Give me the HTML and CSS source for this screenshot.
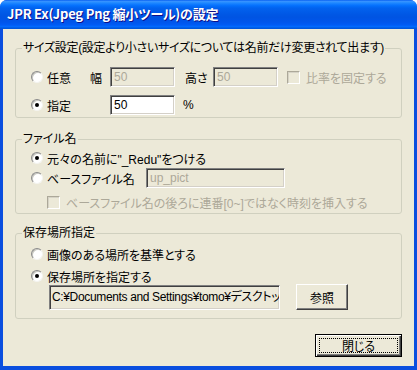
FILE: index.html
```html
<!DOCTYPE html>
<html lang="ja">
<head>
    <meta charset="UTF-8">
    <title>JPR Ex の設定</title>
    <link rel="stylesheet" href="styles.css">
</head>
<body>
<div class="window">
    <div class="titlebar">JPR Ex(Jpeg Png 縮小ツール)の設定</div>
    <div class="client">
        <fieldset class="group g-size">
            <legend>サイズ設定(設定より小さいサイズについては名前だけ変更されて出ます)</legend>
            <div class="body">
                <div class="row r-any">
                    <span class="opt w-any"><span class="radio"></span>任意</span>
                    <span class="lbl w-haba">幅</span>
                    <span class="edit off w-num">50</span>
                    <span class="lbl w-taka">高さ</span>
                    <span class="edit off w-num">50</span>
                    <span class="opt off chk-ratio"><span class="check"></span>比率を固定する</span>
                </div>
                <div class="row r-pct">
                    <span class="opt w-pct"><span class="radio on"></span>指定</span>
                    <span class="edit w-num">50</span>
                    <span class="lbl pct">%</span>
                </div>
            </div>
        </fieldset>

        <fieldset class="group g-name">
            <legend>ファイル名</legend>
            <div class="body">
                <div class="row r-20">
                    <span class="opt"><span class="radio on"></span>元々の名前に"_Redu"をつける</span>
                </div>
                <div class="row r-20">
                    <span class="opt w-base"><span class="radio"></span>ベースファイル名</span>
                    <span class="edit off w-base-edit">up_pict</span>
                </div>
                <div class="row r-20 r-time">
                    <span class="opt off"><span class="check"></span>ベースファイル名の後ろに連番[0~]ではなく時刻を挿入する</span>
                </div>
            </div>
        </fieldset>

        <fieldset class="group g-place">
            <legend>保存場所指定</legend>
            <div class="body">
                <div class="row r-18">
                    <span class="opt"><span class="radio"></span>画像のある場所を基準とする</span>
                </div>
                <div class="row r-18 r-gap">
                    <span class="opt"><span class="radio on"></span>保存場所を指定する</span>
                </div>
                <div class="row r-path">
                    <span class="edit ro w-path">C:¥Documents and Settings¥tomo¥デスクトッ</span>
                    <span class="btn btn-ref">参照</span>
                </div>
            </div>
        </fieldset>

        <div class="footer">
            <span class="btn btn-close"><span class="focus">閉じる</span></span>
        </div>
    </div>
</div>
</body>
</html>
```

FILE: styles.css
```css
* {
    box-sizing: border-box;
}
body {
    margin: 0;
    background: #fff;
    font-family: "Liberation Sans", "Noto Sans CJK JP", sans-serif;
    font-size: 12px;
    font-feature-settings: "palt";
    color: #000;
}
.window {
    width: 417px;
    height: 370px;
    display: flex;
    flex-direction: column;
    border-radius: 7px 7px 0 0;
    overflow: hidden;
    background: #0A4EDF;
}
.titlebar {
    height: 29px;
    padding: 6px 0 0 7px;
    color: #fff;
    font-family: "Noto Sans CJK JP", sans-serif;
    font-weight: bold;
    font-size: 13px;
    line-height: 16px;
    letter-spacing: -0.2px;
    text-shadow: 1px 1px 0 #0F1089;
    background: linear-gradient(to bottom, #0058EE 0%, #3A93FF 4%, #288EFF 8%, #127DFF 14%, #036FFC 20%, #0262EE 28%, #0057E5 50%, #0054E3 60%, #0055EB 76%, #005BF5 86%, #026AFE 92%, #0062EF 94%, #0052D6 100%);
}
.client {
    flex: 1;
    margin: 0 3px 4px 3px;
    background: #ECE9D8;
    padding: 12px 12px 0 12px;
    display: flex;
    flex-direction: column;
}

/* group boxes */
.group {
    margin: 0;
    padding: 0 0 0 6px;
    border: 1px solid #D0D0BF;
    border-radius: 3px;
    min-width: 0;
}
.group legend {
    padding: 0 1px;
    line-height: 14px;
}
.g-size legend {
    letter-spacing: -0.3px;
}
.group .body {
    padding-left: 9px;
}
.g-size .body {
    padding-top: 11px;
    padding-bottom: 1px;
}
.g-name {
    margin-top: 14px;
}
.g-name .body {
    padding-top: 2px;
    padding-bottom: 1px;
}
.g-place {
    margin-top: 12px;
}
.g-place .body {
    padding-top: 5px;
    padding-bottom: 8px;
}

.row {
    display: flex;
    align-items: center;
}
.r-any, .r-pct {
    height: 22px;
}
.r-pct {
    margin-top: 6px;
}
.r-20 {
    height: 20px;
}
.r-time {
    margin-top: 4px;
    padding-left: 16px;
}
.r-18 {
    height: 18px;
}
.r-gap {
    margin-top: 4px;
}
.r-path {
    height: 26px;
    margin-top: -1px;
}

/* option buttons and check boxes */
.opt {
    display: inline-flex;
    align-items: center;
    gap: 4px;
    white-space: nowrap;
}
.opt.off {
    color: #ACA899;
}
.radio {
    position: relative;
    width: 12px;
    height: 12px;
    flex: none;
    border-radius: 50%;
    background: #fff;
    border: 1px solid;
    border-color: #8A8A8A #F4F4F0 #F4F4F0 #8A8A8A;
    box-shadow: inset 1px 1px 0 #C8C8C0;
}
.radio.on::after {
    content: "";
    position: absolute;
    left: 3px;
    top: 3px;
    width: 4px;
    height: 4px;
    border-radius: 50%;
    background: #000;
}
.check {
    width: 13px;
    height: 13px;
    flex: none;
    border: 1px solid;
    border-color: #ACA899 #fff #fff #ACA899;
    box-shadow: inset 1px 1px 0 #D6D3C6;
    background: #ECE9D8;
    margin-right: 2px;
}

.lbl {
    white-space: nowrap;
}
.w-any {
    width: 59px;
}
.w-haba {
    width: 20px;
}
.w-taka {
    width: 28px;
    margin-left: 10px;
}
.w-pct {
    width: 79px;
}
.pct {
    margin-left: 8px;
}
.chk-ratio {
    margin-left: 9px;
}
.w-base {
    width: 115px;
}

/* edit boxes */
.edit {
    height: 20px;
    padding: 2px 3px 0 3px;
    line-height: 15px;
    white-space: nowrap;
    overflow: hidden;
    background: #fff;
    border: 1px solid;
    border-color: #808080 #fff #fff #808080;
    box-shadow: inset 1px 1px 0 #404040, inset -1px -1px 0 #D4D0C8;
}
.edit.off {
    background: #ECE9D8;
    color: #ACA899;
}
.edit.ro {
    background: #ECE9D8;
}
.w-num {
    width: 65px;
}
.w-base-edit {
    width: 139px;
}
.w-path {
    width: 231px;
    height: 25px;
    margin-left: 18px;
    padding: 4px 0 0 2px;
    letter-spacing: -0.35px;
}

/* push buttons */
.btn {
    display: flex;
    align-items: center;
    justify-content: center;
    background: #ECE9D8;
    border: 1px solid;
    border-color: #fff #404040 #404040 #fff;
    box-shadow: inset -1px -1px 0 #808080;
}
.btn-ref {
    width: 52px;
    height: 26px;
    margin-left: 16px;
}
.footer {
    display: flex;
    justify-content: flex-end;
    margin-top: 15px;
}
.btn-close {
    width: 87px;
    height: 23px;
    border: 1px solid #000;
    box-shadow: inset 1px 1px 0 #fff, inset -1px -1px 0 #404040, inset -2px -2px 0 #808080;
    padding: 3px;
}
.btn-close .focus {
    flex: 1;
    height: 100%;
    display: flex;
    align-items: center;
    justify-content: center;
    border: 1px dotted #000;
}
```
